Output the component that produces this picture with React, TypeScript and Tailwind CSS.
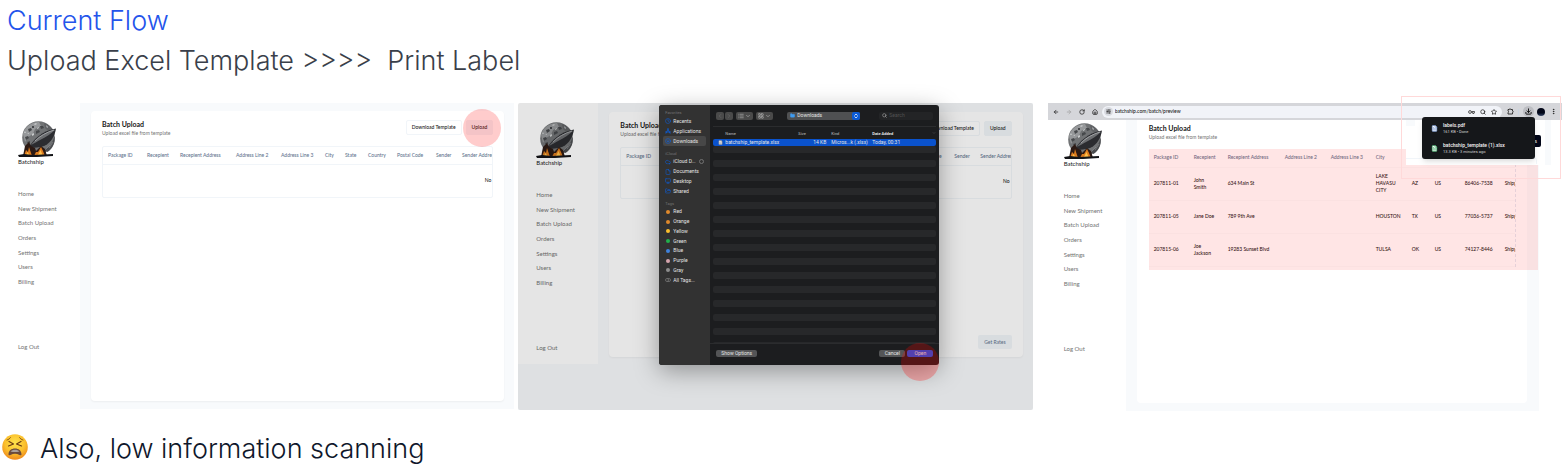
import type { ReactNode } from "react";
import {
  ArrowLeft,
  ArrowRight,
  ChevronDown,
  ChevronLeft,
  ChevronRight,
  ChevronsUpDown,
  Clock,
  Cloud,
  CircleArrowDown,
  Download,
  EllipsisVertical,
  File,
  FileText,
  Folder,
  FolderOpen,
  House,
  LayoutGrid,
  List,
  Monitor,
  RotateCw,
  Search,
  SlidersHorizontal,
  Star,
} from "lucide-react";

const NAV_ITEMS = ["Home", "New Shipment", "Batch Upload", "Orders", "Settings", "Users", "Billing"];

function Logo() {
  return (
    <svg viewBox="0 0 38 37" className="h-[37px] w-[38px]" role="img" aria-label="Batchship logo">
      <circle cx="20.500" cy="16.500" r="16.300" fill="#717375" />
      <path d="M5 13C7 5 14 1 21 1l2 4-6 3-2 5-5 3-3 5z" fill="#96989a" />
      <path d="M26 2c6 2 9 6 10 10l-5-1-4-4z" fill="#606265" />
      <path d="M10 8l3-1 1 2-3 2zM18 10l3-1 1 2-4 2zM7 16l3-1 1 2-3 2zM22 5l3 0 1 2-3 1zM9 21l3-1 0 2-2 1zM14 5l2 0 0 2-2 0z" fill="#46484b" />
      <path d="M16 3l2-1 1 1-2 1zM14 13l2-1 0 2-2 1zM19 7l2-1 0 1-2 1zM28 4l2 2-1 1zM6 12l1-2 1 2zM9 13l2-1 0 1z" fill="#c8cacb" />
      <path d="M25 29c6-2 10-7 11.500-14 1 6-1 12-7 16z" fill="#4b4d50" />
      <path d="M27 29l5-5M31 27l4-6" stroke="#8b8d8f" strokeWidth="0.700" />
      <path d="M11 26C16 18 24 10 38 7.500c-1 7-5 14-11 17-5 2-11 3-16 1.500z" fill="#2b2c30" />
      <path d="M13 24C18 17 26 11 37.500 8.500 33 13 28 16 23 18.500c-4 2-7 4-10 5.500z" fill="#6b6d70" />
      <path d="M17 20C22 15 28 11.500 36 9" fill="none" stroke="#a5a7a9" strokeWidth="0.900" />
      <path d="M5 35l2-10 4-4 2 4 4 2 1 3 5-5 4 3 2 7z" fill="#2c1a14" />
      <path d="M6 35l2-6 2 2 1-5 2 6 1 3zM16 35l2-4 2 0 3-5 2 4 2 5z" fill="#dd7c1f" />
      <path d="M8 34l1.500-3 2 3zM20 34l2.500-5 2 5z" fill="#ffc04a" />
      <path d="M0 34l6-1 9 1 20-1v2l-16 1H1z" fill="#131418" />
    </svg>
  );
}

function Sidebar({ className = "" }: { className?: string }) {
  return (
    <aside className={`shrink-0 bg-white text-[6px] leading-[8px] text-neutral-500 ${className}`}>
      <Logo />
      <div className="text-neutral-900">Batchship</div>
      <nav className="mt-6 flex h-24 flex-col justify-between">
        {NAV_ITEMS.map((item) => (
          <a key={item} href="#">
            {item}
          </a>
        ))}
      </nav>
      <a href="#" className="mt-[57px] block">
        Log Out
      </a>
    </aside>
  );
}

function PageTitle() {
  return (
    <div>
      <h2 className="text-[7px] leading-[9px] font-bold text-neutral-900">Batch Upload</h2>
      <p className="text-[5px] leading-[9px] text-neutral-500">Upload excel file from template</p>
    </div>
  );
}

const UPLOAD_COLUMNS = [
  { label: "Package ID", width: "w-[39px]" },
  { label: "Recepient", width: "w-[33px]" },
  { label: "Recepient Address", width: "w-[56px]" },
  { label: "Address Line 2", width: "w-[45px]" },
  { label: "Address Line 3", width: "w-[44px]" },
  { label: "City", width: "w-[20px]" },
  { label: "State", width: "w-[23px]" },
  { label: "Country", width: "w-[29px]" },
  { label: "Postal Code", width: "w-[39px]" },
  { label: "Sender", width: "w-[26px]" },
  { label: "Sender Address", width: "" },
];

function UploadCard({ className = "", children }: { className?: string; children?: ReactNode }) {
  return (
    <main className={`flex min-w-0 flex-1 flex-col rounded-sm bg-white px-[11px] pt-[9px] shadow-xs ${className}`}>
      <div className="flex items-start justify-between">
        <PageTitle />
        <div className="flex gap-1 text-[5px] leading-[13px] font-medium text-neutral-900">
          <button className="rounded-xs border border-slate-100 px-[5px]">Download Template</button>
          <button className="rounded-xs border border-slate-100 bg-slate-100 px-[5px]">Upload</button>
        </div>
      </div>
      <div className="mt-2 overflow-hidden rounded-xs border border-slate-100">
        <table className="w-full table-fixed text-left text-[5px] leading-[7px] whitespace-nowrap">
          <thead>
            <tr className="h-[17px] border-b border-slate-100 text-slate-500">
              {UPLOAD_COLUMNS.map((c) => (
                <th key={c.label} className={`pl-[5px] font-medium ${c.width}`}>
                  {c.label}
                </th>
              ))}
            </tr>
          </thead>
          <tbody>
            <tr className="h-[33px] text-neutral-900">
              <td colSpan={UPLOAD_COLUMNS.length} className="pr-px text-right font-medium">
                No
              </td>
            </tr>
          </tbody>
        </table>
      </div>
      {children}
    </main>
  );
}

function UploadPanel() {
  return (
    <section className="relative flex min-w-0 flex-1 self-start bg-slate-50">
      <Sidebar className="w-20 pt-[18px] pb-[58px] pl-[18px]" />
      <UploadCard className="mr-[10px] mb-2 ml-[11px] mt-2" />
      <div className="absolute top-[6px] right-[13px] size-[38px] rounded-full bg-[#ff0000]/20" />
    </section>
  );
}

type SideItem = { label: string; icon: ReactNode; active?: boolean };

const blueIcon = "size-[6px] shrink-0 text-[#0a62e6]";

function AppsIcon() {
  return (
    <svg viewBox="0 0 12 12" className={blueIcon} fill="none" stroke="currentColor" strokeWidth="1.500" strokeLinecap="round">
      <path d="M6.500 1.500L2 10.500M5.500 1.500L10 10.500M1 8h10" />
    </svg>
  );
}

function AllTagsIcon() {
  return (
    <svg viewBox="0 0 12 12" className="size-[6px] shrink-0" fill="none" stroke="#8a8a8a" strokeWidth="1.200">
      <circle cx="4" cy="6" r="3" />
      <path d="M5 3h3a3 3 0 0 1 0 6H5" />
    </svg>
  );
}

const FAVORITES: SideItem[] = [
  { label: "Recents", icon: <Clock className={blueIcon} /> },
  { label: "Applications", icon: <AppsIcon /> },
  { label: "Downloads", icon: <CircleArrowDown className={blueIcon} />, active: true },
];

const ICLOUD: SideItem[] = [
  { label: "iCloud D...", icon: <Cloud className={blueIcon} /> },
  { label: "Documents", icon: <File className={blueIcon} /> },
  { label: "Desktop", icon: <Monitor className={blueIcon} /> },
  { label: "Shared", icon: <FolderOpen className={blueIcon} /> },
];

const TAGS: SideItem[] = [
  { label: "Red", icon: <span className="mx-px size-1 rounded-full bg-[#e08a2c]" /> },
  { label: "Orange", icon: <span className="mx-px size-1 rounded-full bg-[#e08a2c]" /> },
  { label: "Yellow", icon: <span className="mx-px size-1 rounded-full bg-[#fdbf2d]" /> },
  { label: "Green", icon: <span className="mx-px size-1 rounded-full bg-[#22b14c]" /> },
  { label: "Blue", icon: <span className="mx-px size-1 rounded-full bg-[#3f82dc]" /> },
  { label: "Purple", icon: <span className="mx-px size-1 rounded-full bg-[#d6a5ae]" /> },
  { label: "Gray", icon: <span className="mx-px size-1 rounded-full bg-[#8e8e8e]" /> },
  { label: "All Tags...", icon: <AllTagsIcon /> },
];

function SideGroup({ title, items, height }: { title: string; items: SideItem[]; height: string }) {
  return (
    <div className="mt-[5px]">
      <div className="pl-[2px] text-[4px] leading-[6px] text-neutral-500">{title}</div>
      <ul className={`flex flex-col ${height}`}>
        {items.map((i) => (
          <li
            key={i.label}
            className={`flex flex-1 items-center gap-[2px] rounded-xs px-[2px] whitespace-nowrap ${i.active ? "bg-[#474747]" : ""}`}
          >
            {i.icon}
            {i.label}
            {i.label.startsWith("iCloud") && (
              <span className="ml-px size-[5px] shrink-0 rounded-full border border-neutral-500" />
            )}
          </li>
        ))}
      </ul>
    </div>
  );
}

function FileDialog() {
  return (
    <div
      role="dialog"
      aria-label="Open file"
      className="absolute top-[2px] left-[141px] flex h-[260px] w-[280px] overflow-hidden rounded-[3px] bg-[#1c1d1f] font-[Roboto,sans-serif] text-[5px] leading-[7px] text-neutral-200 shadow-[0_6px_24px_rgba(0,0,0,0.35)]"
    >
      <div className="w-[51px] shrink-0 bg-[#323232] px-1">
        <SideGroup title="Favorites" items={FAVORITES} height="h-[30px]" />
        <SideGroup title="iCloud" items={ICLOUD} height="h-[39px]" />
        <SideGroup title="Tags" items={TAGS} height="h-[78px]" />
      </div>

      <div className="flex min-w-0 flex-1 flex-col">
        {/* Toolbar */}
        <div className="flex h-[21px] items-center px-[6px] text-neutral-400">
          <div className="flex gap-px">
            <button aria-label="Back" className="rounded-xs bg-[#4a4a4a] p-px text-neutral-500">
              <ChevronLeft className="size-[6px]" />
            </button>
            <button aria-label="Forward" className="rounded-xs bg-[#4a4a4a] p-px text-neutral-500">
              <ChevronRight className="size-[6px]" />
            </button>
          </div>
          <button aria-label="List view" className="ml-[3px] flex gap-px rounded-xs bg-[#4a4a4a] px-[2px] py-px">
            <List className="size-[6px]" strokeWidth={3} />
            <ChevronDown className="size-[6px]" strokeWidth={3} />
          </button>
          <button aria-label="Group by" className="ml-[3px] flex gap-px rounded-xs bg-[#4a4a4a] px-[2px] py-px">
            <LayoutGrid className="size-[6px]" strokeWidth={3} />
            <ChevronDown className="size-[6px]" strokeWidth={3} />
          </button>
          <div className="ml-[14px] flex h-2 w-[73px] items-center rounded-xs bg-[#4f5052] pl-[3px]">
            <Folder className="size-[5px] fill-[#3f9bf0] text-[#3f9bf0]" />
            <select aria-label="Location" className="ml-[2px] min-w-0 flex-1 appearance-none text-neutral-200">
              <option>Downloads</option>
            </select>
            <span className="rounded-xs bg-[#0a5ad6] p-px text-white">
              <ChevronsUpDown className="size-[6px]" strokeWidth={3} />
            </span>
          </div>
          <label className="ml-auto flex h-2 w-[54px] items-center gap-[2px] rounded-xs bg-[#232426] px-[3px]">
            <Search className="size-[5px] shrink-0" strokeWidth={3} aria-label="Search files" />
            <input type="search" placeholder="Search" className="w-full min-w-0 placeholder:text-neutral-600" />
          </label>
        </div>

        {/* File list */}
        <div className="mx-[3px] flex min-h-0 flex-1 flex-col border-t border-[#2b2c2e]">
          <table className="w-full table-fixed text-left whitespace-nowrap">
            <thead>
              <tr className="h-3 text-[4px] text-neutral-400">
                <th className="w-[82px] pl-3 font-medium">Name</th>
                <th className="w-[33px] pl-[3px] font-medium">Size</th>
                <th className="w-[41px] pl-[3px] font-medium">Kind</th>
                <th className="pl-[3px] font-bold text-neutral-200">
                  <span className="flex items-center justify-between">
                    Date Added
                    <ChevronDown className="size-1 text-neutral-500" />
                  </span>
                </th>
              </tr>
            </thead>
            <tbody>
              <tr className="h-[7px] bg-[#0a52cc]">
                <td className="rounded-l-xs pl-[5px]">
                  <span className="flex items-center gap-[2px]">
                    <FileText className="size-[5px] fill-white text-neutral-500" />
                    batchship_template.xlsx
                  </span>
                </td>
                <td className="pr-[2px] text-right">14 KB</td>
                <td className="pl-[3px]">Micros...k (.xlsx)</td>
                <td className="rounded-r-xs pl-[3px]">Today, 00:31</td>
              </tr>
            </tbody>
          </table>
          <div className="min-h-0 flex-1 overflow-hidden">
            {Array.from({ length: 15 }, (_, i) => (
              <div key={i} className="mb-[7px] h-[7px] rounded-xs bg-[#27282a]" />
            ))}
          </div>
        </div>

        {/* Footer */}
        <div className="flex h-[22px] items-center border-t border-[#2b2c2e] px-[6px] pb-[2px]">
          <button className="h-[7px] rounded-xs bg-[#545557] px-[5px]">Show Options</button>
          <button className="ml-auto h-[7px] w-[26px] rounded-xs bg-[#545557]">Cancel</button>
          <button className="ml-[2px] h-[7px] w-[26px] rounded-xs bg-[#1a56e8]">Open</button>
        </div>
      </div>
    </div>
  );
}

function DialogPanel() {
  return (
    <section className="relative ml-1 flex min-w-0 flex-1 items-start self-stretch">
      <div className="mb-px flex w-full items-start self-stretch bg-slate-50">
        <Sidebar className="w-20 pt-[19px] pb-[12px] pl-[18px]" />
        <UploadCard className="mr-[10px] ml-[11px] mt-[9px]">
          <div className="mt-[136px] mb-2 flex justify-end">
            <button className="rounded-xs bg-slate-100 px-[6px] text-[5px] leading-[14px] text-slate-500">
              Get Rates
            </button>
          </div>
        </UploadCard>
      </div>
      <div className="absolute inset-x-0 top-0 bottom-px rounded-xs bg-black/10" />
      <FileDialog />
      <div className="absolute top-[240px] right-[94px] size-[38px] rounded-full bg-[#ff0000]/25" />
    </section>
  );
}

const PREVIEW_COLUMNS = [
  { label: "Package ID", width: "w-[40px]" },
  { label: "Recepient", width: "w-[34px]" },
  { label: "Recepient Address", width: "w-[57px]" },
  { label: "Address Line 2", width: "w-[46px]" },
  { label: "Address Line 3", width: "w-[45px]" },
  { label: "City", width: "w-[36px]" },
];

const SHIPMENTS = [
  { id: "207811-01", name: ["John", "Smith"], street: "634 Main St", city: "LAKE HAVASU CITY", state: "AZ", zip: "86406-7538" },
  { id: "207811-05", name: ["Jane Doe"], street: "789 9th Ave", city: "HOUSTON", state: "TX", zip: "77036-5737" },
  { id: "207815-06", name: ["Joe", "Jackson"], street: "19283 Sunset Blvd", city: "TULSA", state: "OK", zip: "74127-8446" },
];

function PreviewTable() {
  return (
    <div className="relative mt-[7px]">
      <div className="overflow-hidden border-r border-dashed border-slate-200">
        <table className="w-full table-fixed text-left text-[5px] leading-[7px]">
          <thead>
            <tr className="h-[18px] border-b border-neutral-50 whitespace-nowrap text-slate-500">
              {PREVIEW_COLUMNS.map((c) => (
                <th key={c.label} className={`pl-[5px] font-medium ${c.width}`}>
                  {c.label}
                </th>
              ))}
              <td className="w-[23px]" />
              <td className="w-[30px]" />
              <td className="w-[40px]" />
              <td />
            </tr>
          </thead>
          <tbody className="font-medium text-neutral-900">
            {SHIPMENTS.map((s) => (
              <tr key={s.id} className="h-[33px] border-b border-neutral-50">
                <td className="pl-[5px]">{s.id}</td>
                <td className="pl-[5px]">
                  {s.name.map((part) => (
                    <span key={part} className="block">
                      {part}
                    </span>
                  ))}
                </td>
                <td className="pl-[5px] whitespace-nowrap">{s.street}</td>
                <td />
                <td />
                <td className="pr-[3px] pl-[5px]">{s.city}</td>
                <td className="pl-[5px]">{s.state}</td>
                <td className="pl-[5px]">US</td>
                <td className="pl-[5px]">{s.zip}</td>
                <td className="pl-[5px]">Shipp</td>
              </tr>
            ))}
          </tbody>
        </table>
      </div>
      <div className="absolute top-0 -right-[22px] -bottom-[3px] left-0 bg-[#ff0000]/10" />
    </div>
  );
}

function KeyIcon() {
  return (
    <svg viewBox="0 0 14 12" className="h-[6px] w-[7px]" fill="none" stroke="currentColor" strokeWidth="1.500">
      <circle cx="4" cy="6" r="2.800" />
      <path d="M7 5h6v2h-1v2H9.500V7H7" />
    </svg>
  );
}

function ExtensionsIcon() {
  return (
    <svg viewBox="0 0 14 14" className="size-[7px]" fill="none" stroke="currentColor" strokeWidth="1.800" strokeLinejoin="round">
      <path d="M2 3h2.500c0-2 3-2 3 0H11v3c2 0 2 3 0 3v3H2V9c1.500 0 1.500-3 0-3z" />
    </svg>
  );
}

function BrowserBar() {
  return (
    <div className="flex h-[17px] items-center bg-[#d5d6da] px-[5px] text-neutral-800">
      <div className="flex shrink-0 gap-[7px]">
        <ArrowLeft className="size-[6px]" strokeWidth={3} />
        <ArrowRight className="size-[6px] text-neutral-400" strokeWidth={3} />
        <RotateCw className="size-[6px]" strokeWidth={3} />
        <House className="size-[6px]" strokeWidth={3} />
      </div>
      <div className="ml-1 flex h-3 min-w-0 flex-1 items-center rounded-full bg-[#f1f3f8] pr-[5px] pl-[2px]">
        <span className="rounded-full bg-[#d9dbe1] p-[2px]">
          <SlidersHorizontal className="size-[5px]" strokeWidth={3} />
        </span>
        <input
          aria-label="Address"
          defaultValue="batchship.com/batch/preview"
          className="ml-[2px] min-w-0 flex-1 text-[5px] font-medium text-neutral-900"
        />
        <div className="flex gap-[5px]">
          <KeyIcon />
          <Search className="size-[6px]" strokeWidth={3} />
          <Star className="size-[6px]" strokeWidth={3} />
        </div>
      </div>
      <div className="ml-[5px] flex shrink-0 items-center">
        <ExtensionsIcon />
        <span className="mx-1 h-[6px] w-px bg-slate-300" />
        <span className="rounded-full bg-[#bcbdc2] p-[2px]">
          <Download className="size-[7px] text-black" strokeWidth={3} />
        </span>
        <span className="ml-[3px] size-2 rounded-full bg-linear-to-b from-slate-950 from-60% to-[#3c4a6b]" />
        <EllipsisVertical className="ml-[5px] size-[7px]" strokeWidth={3} />
      </div>
    </div>
  );
}

const DOWNLOADS = [
  { name: "labels.pdf", meta: "161 KB • Done", icon: "fill-white text-[#5b83c9]" },
  { name: "batchship_template (1).xlsx", meta: "13.3 KB • 3 minutes ago", icon: "fill-white text-[#1e9c4c]" },
];

// Enlarged corner of the browser with the finished download
function DownloadCallout() {
  return (
    <div className="absolute -top-[7px] right-px h-[83px] w-[160px] border border-[#ffd9d9]">
      <div className="absolute top-[23px] right-[9px] left-1 h-[45px] border-r-6 border-slate-50 bg-white">
        <div className="mr-[130px] h-[6px] bg-slate-50" />
        <div className="mt-8 mr-2 h-[6px] rounded-tr-xs border-t border-r border-slate-100" />
      </div>
      <button className="absolute top-[38px] right-[19px] h-3 w-4 rounded-xs bg-slate-950 pr-1 text-right text-[5px] leading-3 text-white">
        s
      </button>
      <ul className="absolute top-[20px] left-[20px] flex h-[42px] w-[113px] flex-col justify-around rounded-[3px] bg-[#15171a] px-[9px] py-px shadow-md">
        {DOWNLOADS.map((d) => (
          <li key={d.name} className="flex items-center gap-[5px]">
            <FileText className={`size-[7px] shrink-0 ${d.icon}`} />
            <div className="font-[Roboto,sans-serif] whitespace-nowrap text-neutral-100">
              <div className="text-[5px] leading-[7px] font-medium">{d.name}</div>
              <div className="text-[4px] leading-[6px] text-neutral-300">{d.meta}</div>
            </div>
          </li>
        ))}
      </ul>
    </div>
  );
}

function PreviewPanel() {
  return (
    <section className="relative ml-[15px] min-w-0 flex-1">
      <BrowserBar />
      <div className="mr-[23px] flex bg-slate-50">
        <Sidebar className="w-[78px] pt-[3px] pb-[58px] pl-4" />
        <main className="mr-3 mb-2 ml-[11px] min-w-0 flex-1 rounded-b-sm bg-white pt-1 pr-[11px] pl-3">
          <PageTitle />
          <PreviewTable />
        </main>
      </div>
      <DownloadCallout />
    </section>
  );
}

function WearyFace() {
  return (
    <svg viewBox="0 0 26 26" className="-mt-1 size-[26px]" role="img" aria-label="Weary face">
      <defs>
        <radialGradient id="face" cx="50%" cy="35%" r="65%">
          <stop offset="0" stopColor="#ffe34d" />
          <stop offset="0.6" stopColor="#fbc02d" />
          <stop offset="1" stopColor="#ee8a1d" />
        </radialGradient>
      </defs>
      <circle cx="13" cy="13" r="12.800" fill="url(#face)" />
      <g fill="none" stroke="#6b3a12" strokeLinecap="round" strokeLinejoin="round">
        <path d="M7 7.500l4.500 2.500-5 2M19 7.500l-4.500 2.500 5 2" strokeWidth="1.200" />
        <path d="M5 6c1.500-.4 2.600-1.200 3.400-2.400M21 6c-1.500-.4-2.600-1.200-3.400-2.400" strokeWidth="0.800" />
      </g>
      <path d="M6.500 20.500c0-4 3-6 6.500-6s6.500 2 6.500 6c0 1-1 1-2 .4-3-1.600-6-1.600-9 0-1 .6-2 .6-2-.4z" fill="#6a4a3c" />
      <path d="M8.500 17.400c2-2.200 7-2.200 9 0-3 .8-6 .8-9 0z" fill="#a9a09c" />
    </svg>
  );
}

export default function App() {
  return (
    <div className="min-h-screen overflow-hidden bg-white font-[Lato,sans-serif]">
      <header className="px-[7px] pt-px font-[Inter,sans-serif] text-[27px] leading-10 font-light">
        <h1 className="text-[#2454eb]">Current Flow</h1>
        <p className="whitespace-pre text-[#3a3f4a]">{"Upload Excel Template >>>>  Print Label"}</p>
      </header>
      <div className="mt-[22px] flex items-start">
        <UploadPanel />
        <DialogPanel />
        <PreviewPanel />
      </div>
      <footer className="mt-[18px] flex items-center gap-3 pl-[2px] font-[Inter,sans-serif] text-[27px] leading-10 font-light text-slate-900">
        <WearyFace />
        <p>Also, low information scanning</p>
      </footer>
    </div>
  );
}
